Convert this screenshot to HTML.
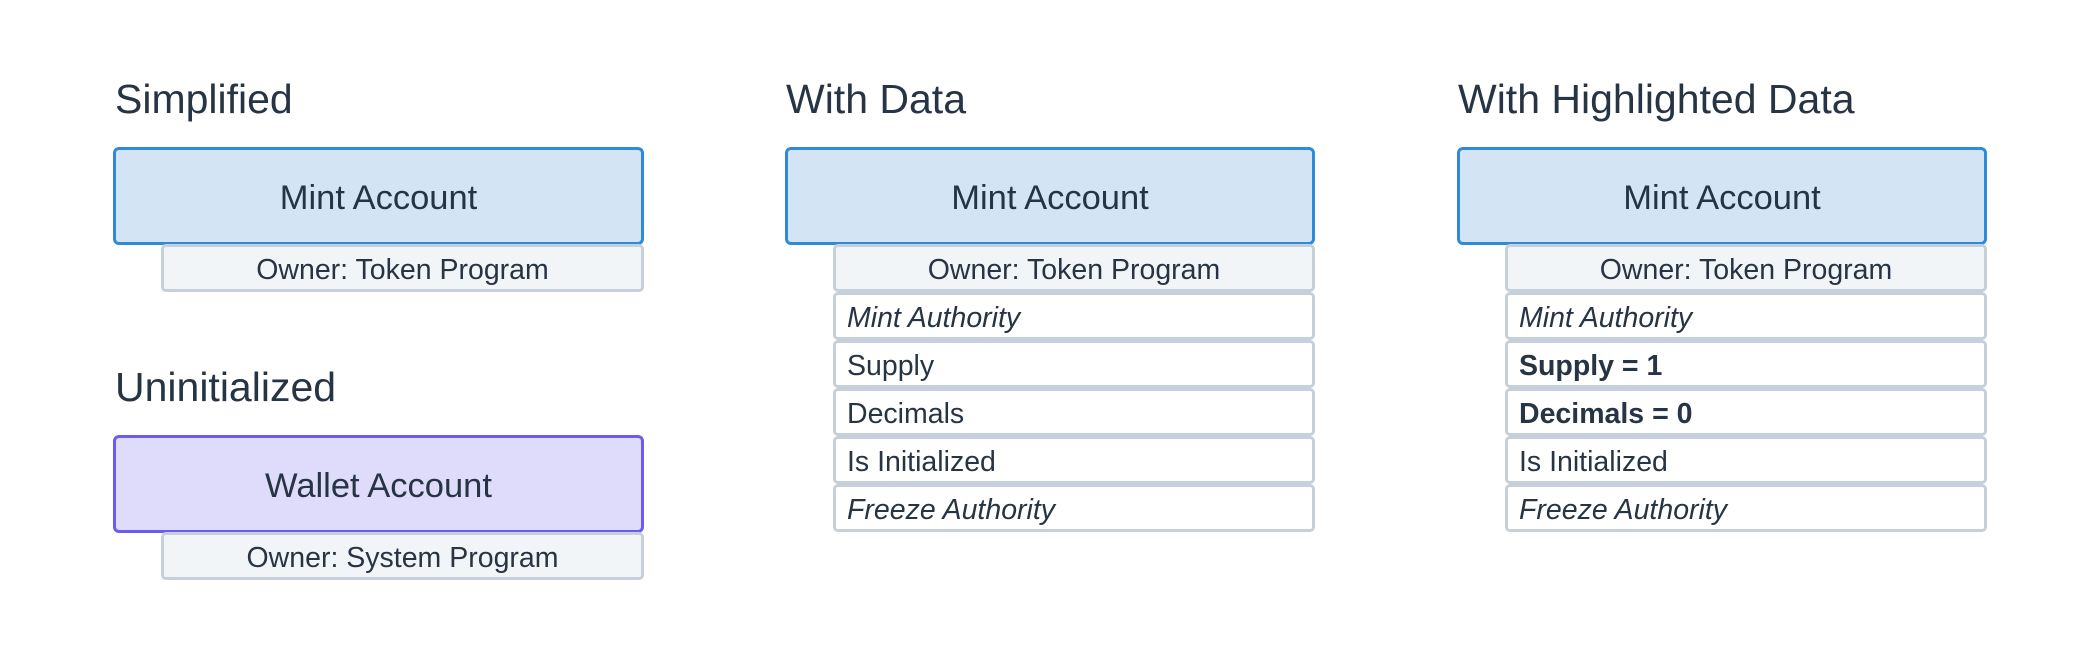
<!DOCTYPE html>
<html><head><meta charset="utf-8"><style>
*{box-sizing:border-box;margin:0;padding:0}
body{width:2100px;height:648px;background:#fff;position:relative;font-family:"Liberation Sans",sans-serif;color:#263444;overflow:hidden}
.t{position:absolute;font-size:41px;line-height:1}
.b{position:absolute;border:3px solid #2f8ad8;background:#d3e5f5;border-radius:6px;font-size:34.5px;display:flex;align-items:center;justify-content:center;padding-top:4px}
.p{border-color:#6a5cf0;background:#dfdbfb}
.r{position:absolute;border:3px solid #c6d0da;border-radius:5px;background:#fff;font-size:28.5px;display:flex;align-items:center;padding-left:11px;height:48px;padding-top:4px}
.o{background:#f1f5f8;justify-content:center;padding-left:0}
i{font-style:italic}
.bd{font-weight:bold}
</style></head><body>
<div class="t" style="left:115px;top:79px">Simplified</div>
<div class="b" style="left:113px;top:147px;width:531px;height:98px">Mint Account</div>
<div class="r o" style="left:161px;top:244px;width:483px">Owner: Token Program</div>
<div class="t" style="left:115px;top:367px">Uninitialized</div>
<div class="b p" style="left:113px;top:435px;width:531px;height:98px">Wallet Account</div>
<div class="r o" style="left:161px;top:532px;width:483px">Owner: System Program</div>

<div class="t" style="left:786px;top:79px">With Data</div>
<div class="b" style="left:785px;top:147px;width:530px;height:98px">Mint Account</div>
<div class="r o" style="left:833px;top:244px;width:482px">Owner: Token Program</div>
<div class="r" style="left:833px;top:292px;width:482px"><i>Mint Authority</i></div>
<div class="r" style="left:833px;top:340px;width:482px">Supply</div>
<div class="r" style="left:833px;top:388px;width:482px">Decimals</div>
<div class="r" style="left:833px;top:436px;width:482px">Is Initialized</div>
<div class="r" style="left:833px;top:484px;width:482px"><i>Freeze Authority</i></div>

<div class="t" style="left:1458px;top:79px">With Highlighted Data</div>
<div class="b" style="left:1457px;top:147px;width:530px;height:98px">Mint Account</div>
<div class="r o" style="left:1505px;top:244px;width:482px">Owner: Token Program</div>
<div class="r" style="left:1505px;top:292px;width:482px"><i>Mint Authority</i></div>
<div class="r bd" style="left:1505px;top:340px;width:482px">Supply = 1</div>
<div class="r bd" style="left:1505px;top:388px;width:482px">Decimals = 0</div>
<div class="r" style="left:1505px;top:436px;width:482px">Is Initialized</div>
<div class="r" style="left:1505px;top:484px;width:482px"><i>Freeze Authority</i></div>
</body></html>
